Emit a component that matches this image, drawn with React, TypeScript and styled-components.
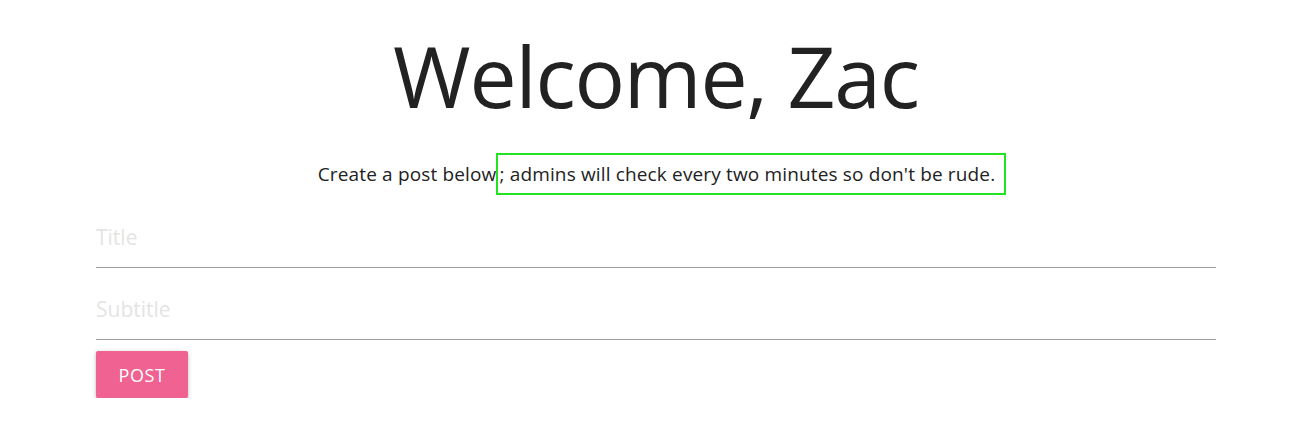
import styled, { createGlobalStyle } from 'styled-components'
import { FC } from 'react'

const GlobalStyle = createGlobalStyle`
  body {
    margin: 0;
    background: #ffffff;
    font-family: 'Open Sans', 'Noto Sans', sans-serif;
    color: rgba(0, 0, 0, 0.87);
  }
`

const Page = styled.div`
  width: 1120px;
  margin-left: 96px;
  display: flex;
  flex-direction: column;
`

const Heading = styled.h1`
  margin: 24px 0 0;
  font-family: 'Open Sans', sans-serif;
  font-weight: 400;
  font-size: 84px;
  line-height: 104px;
  text-align: center;
  color: #222222;
  letter-spacing: -1.2px;
`

const Intro = styled.p`
  margin: 25px 0 0;
  font-size: 19px;
  line-height: 42px;
  height: 42px;
  text-align: center;
  color: #222222;
  letter-spacing: 0.15px;
`

const Highlight = styled.span`
  display: inline-block;
  box-sizing: border-box;
  height: 42px;
  line-height: 38px;
  vertical-align: top;
  border: 2px solid #22e322;
  padding: 0 9px 0 1px;
  margin-right: -12px;
`

const Field = styled.input`
  display: block;
  width: 100%;
  box-sizing: border-box;
  height: 61px;
  margin: 0;
  padding: 0;
  border: none;
  border-bottom: 1px solid #9e9e9e;
  outline: none;
  background: transparent;
  font-family: 'Open Sans', sans-serif;
  font-size: 21px;
  color: #222;
  &::placeholder {
    color: #e4e4e4;
  }
`

const Form = styled.form`
  display: flex;
  flex-direction: column;
  gap: 11px;
  margin-top: 12px;
`

const Fields = styled.div`
  display: flex;
  flex-direction: column;
  gap: 11px;
`

const PostButton = styled.button`
  align-self: flex-start;
  width: 92px;
  height: 47px;
  border: none;
  border-radius: 2px;
  background: #f06292;
  color: #ffffff;
  font-family: 'Open Sans', sans-serif;
  font-size: 18px;
  letter-spacing: 0.6px;
  box-shadow: 0 2px 2px 0 rgba(0, 0, 0, 0.14), 0 3px 1px -2px rgba(0, 0, 0, 0.12),
    0 1px 5px 0 rgba(0, 0, 0, 0.2);
  cursor: pointer;
`

const App: FC = () => {
    return (
        <>
            <GlobalStyle />
            <Page>
                <Heading>Welcome, Zac</Heading>
                <Intro>
                    Create a post below<Highlight>; admins will check every two minutes so don't be rude.</Highlight>
                </Intro>
                <Form onSubmit={(e) => e.preventDefault()}>
                    <Fields>
                        <Field placeholder="Title" />
                        <Field placeholder="Subtitle" />
                    </Fields>
                    <PostButton type="submit">POST</PostButton>
                </Form>
            </Page>
        </>
    )
}
export default App
